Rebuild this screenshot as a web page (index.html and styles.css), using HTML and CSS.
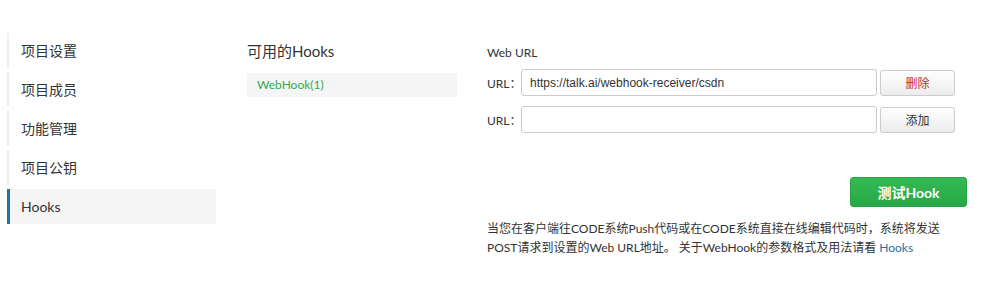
FILE: index.html
```html
<!DOCTYPE html>
<html lang="zh-CN">
<head>
  <meta charset="UTF-8">
  <title>Hooks</title>
  <link rel="stylesheet" href="styles.css">
</head>
<body>
  <div class="page">
    <ul class="side-nav">
      <li>项目设置</li>
      <li>项目成员</li>
      <li>功能管理</li>
      <li>项目公钥</li>
      <li class="active">Hooks</li>
    </ul>

    <div class="hook-list">
      <h3>可用的Hooks</h3>
      <div class="hook-item">WebHook(1)</div>
    </div>

    <div class="hook-form">
      <div class="form-title">Web URL</div>
      <div class="url-row">
        <label>URL：</label>
        <input type="text" value="https://talk.ai/webhook-receiver/csdn">
        <button class="btn btn-delete">删除</button>
      </div>
      <div class="url-row">
        <label>URL：</label>
        <input type="text" value="">
        <button class="btn">添加</button>
      </div>
      <div class="actions">
        <button class="btn-test">测试Hook</button>
      </div>
      <p class="help">当您在客户端往CODE系统Push代码或在CODE系统直接在线编辑代码时，系统将发送POST请求到设置的Web URL地址。 关于WebHook的参数格式及用法请看 <a href="#">Hooks</a></p>
    </div>
  </div>
</body>
</html>
```

FILE: styles.css
```css
* {
  margin: 0;
  padding: 0;
  box-sizing: border-box;
}

body {
  font-family: "Lato", "Noto Sans CJK SC", sans-serif;
  color: #333;
  background: #fff;
}

.page {
  display: flex;
  align-items: flex-start;
  padding: 33px 0 0 7px;
}

.side-nav {
  list-style: none;
  width: 209px;
}

.side-nav li {
  height: 35px;
  line-height: 35px;
  margin-bottom: 4px;
  padding-left: 12px;
  border-left: 2px solid #eee;
  font-size: 14px;
  color: #333;
}

.side-nav li.active {
  background: #f5f5f5;
  border-left: 3px solid #2a6ea9;
  padding-left: 11px;
}

.hook-list {
  width: 210px;
  margin-left: 31px;
}

.hook-list h3 {
  font-size: 15px;
  font-weight: normal;
  line-height: 20px;
  margin-top: 8px;
  margin-bottom: 12px;
}

.hook-item {
  background: #f5f5f5;
  height: 24px;
  line-height: 24px;
  padding-left: 10px;
  font-size: 12px;
  color: #31a94e;
}

.hook-form {
  margin-left: 30px;
  width: 480px;
}

.form-title {
  font-size: 12px;
  line-height: 16px;
  margin-top: 12px;
  margin-bottom: 8px;
}

.url-row {
  display: flex;
  align-items: center;
  margin-bottom: 10px;
}

.url-row label {
  width: 34px;
  font-size: 12px;
}

.url-row input {
  width: 356px;
  height: 27px;
  border: 1px solid #ccc;
  border-radius: 3px;
  padding: 0 8px;
  font-family: "Liberation Sans", sans-serif;
  font-size: 12px;
  color: #333;
}

.btn {
  width: 75px;
  height: 26px;
  margin-left: 3px;
  border: 1px solid #ccc;
  border-radius: 3px;
  background: linear-gradient(#fff, #ececec);
  font-family: "Noto Sans CJK SC", sans-serif;
  font-size: 12px;
  color: #333;
}

.btn-delete {
  color: #b8312f;
}

.actions {
  display: flex;
  justify-content: flex-end;
  margin-top: 44px;
  margin-bottom: 12px;
}

.btn-test {
  width: 117px;
  height: 30px;
  border: 1px solid #27a143;
  border-radius: 3px;
  background: linear-gradient(#34b954, #28a847);
  color: #fff;
  font-family: "Lato", "Noto Sans CJK SC", sans-serif;
  font-size: 14px;
  font-weight: bold;
}

.help {
  font-size: 12px;
  line-height: 19px;
  width: 470px;
  color: #333;
}

.help a {
  color: #2a6ea9;
  text-decoration: none;
}
```
